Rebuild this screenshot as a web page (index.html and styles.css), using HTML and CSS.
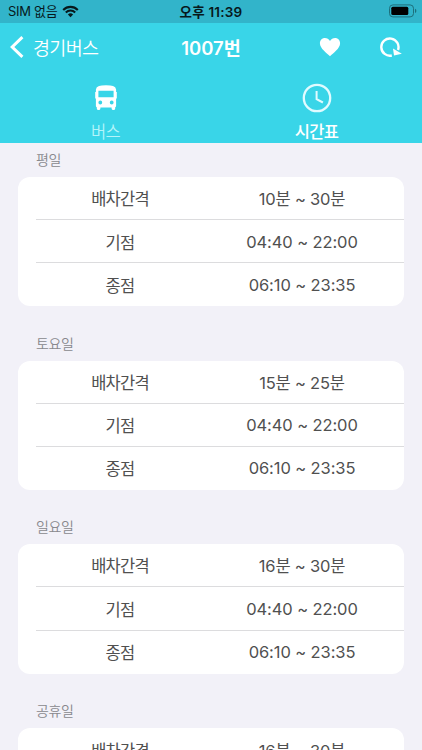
FILE: index.html
```html
<!DOCTYPE html>
<html lang="ko">
<head>
    <meta charset="UTF-8" />
    <meta name="viewport" content="width=device-width, initial-scale=1.0"/>
    <title>경기버스</title>
    <link rel="stylesheet" href="styles.css">
</head>
<body>
<div class="status-bar">
    <div class="carrier">
        <span>SIM 없음</span>
        <svg width="17" height="13" viewBox="0 0 17 13">
            <path d="M1.2 4.9A10.3 10.3 0 0 1 15.8 4.9M3.8 7.5A6.7 6.7 0 0 1 13.2 7.5" fill="none" stroke="#07191c" stroke-width="2.1"/>
            <path d="M8.5 12.2L5.9 9.6A3.7 3.7 0 0 1 11.1 9.6Z" fill="#07191c"/>
        </svg>
    </div>
    <div class="clock">오후 11:39</div>
    <div class="battery">
        <svg width="28" height="14" viewBox="0 0 28 14">
            <rect x="0.5" y="0.9" width="24" height="12" rx="3.4" fill="none" stroke="#1d6f7b"/>
            <rect x="2.3" y="2.7" width="17" height="8.4" rx="1.5" fill="#000"/>
            <path d="M26 4.8Q27.4 5.4 27.4 6.9T26 9Z" fill="#1d6f7b"/>
        </svg>
    </div>
</div>

<header class="header">
    <nav class="nav">
        <a class="back">
            <svg width="14" height="22" viewBox="0 0 14 22">
                <path d="M12.4 1.2L2.2 11L12.4 20.8" fill="none" stroke="#fff" stroke-width="3"/>
            </svg>
            <span>경기버스</span>
        </a>
        <h1 class="title">1007번</h1>
        <div class="actions">
            <svg width="22" height="20" viewBox="0 0 22 20">
                <path d="M11 19.2C8 16.4 0.9 11.5 0.9 6.3C0.9 3 3.1 0.9 5.9 0.9C8 0.9 9.9 2 11 4C12.1 2 14 0.9 16.1 0.9C18.9 0.9 21.1 3 21.1 6.3C21.1 11.5 14 16.4 11 19.2Z" fill="#fff"/>
            </svg>
            <svg width="22" height="22" viewBox="0 0 22 22">
                <path d="M11.8 19.5A8.6 8.6 0 1 1 18 14" fill="none" stroke="#fff" stroke-width="2.4"/>
                <path d="M13 12.4L14 19.4L21.8 17.8Z" fill="#fff"/>
            </svg>
        </div>
    </nav>
    <div class="tabs">
        <div class="tab">
            <svg width="30" height="30" viewBox="0 0 30 30">
                <path fill="#fff" fill-rule="evenodd" d="M8 2.9Q10 2.2 15 2.2T22 2.9Q24.8 3.7 25.1 6.5V9H25.8V15.5H25.1V23Q25.1 24 24.2 24.3V25.5Q24.2 27 22.4 27T20.6 25.5V24.4H9.4V25.5Q9.4 27 7.6 27T5.8 25.5V24.3Q4.9 24 4.9 23V15.5H4.2V9H4.9V6.5Q5.2 3.7 8 2.9ZM7.4 7.8V14.2H22.6V7.8ZM9.3 17.6A1.9 1.9 0 1 0 9.3 21.4A1.9 1.9 0 1 0 9.3 17.6ZM20.7 17.6A1.9 1.9 0 1 0 20.7 21.4A1.9 1.9 0 1 0 20.7 17.6Z"/>
            </svg>
            <span>버스</span>
        </div>
        <div class="tab active">
            <svg width="30" height="30" viewBox="0 0 30 30">
                <circle cx="15" cy="15" r="13.2" fill="none" stroke="#e0fbff" stroke-width="2.3"/>
                <path d="M14.6 8V16.1L20.9 19.5" fill="none" stroke="#e0fbff" stroke-width="2"/>
            </svg>
            <span>시간표</span>
        </div>
    </div>
</header>

<main class="schedule">
    <section class="group">
        <h2>평일</h2>
        <div class="card">
            <div class="row"><span>배차간격</span><span class="interval">10분 ~ 30분</span></div>
            <div class="row"><span>기점</span><span class="time">04:40 ~ 22:00</span></div>
            <div class="row"><span>종점</span><span class="time">06:10 ~ 23:35</span></div>
        </div>
    </section>
    <section class="group">
        <h2>토요일</h2>
        <div class="card">
            <div class="row"><span>배차간격</span><span class="interval">15분 ~ 25분</span></div>
            <div class="row"><span>기점</span><span class="time">04:40 ~ 22:00</span></div>
            <div class="row"><span>종점</span><span class="time">06:10 ~ 23:35</span></div>
        </div>
    </section>
    <section class="group">
        <h2>일요일</h2>
        <div class="card">
            <div class="row"><span>배차간격</span><span class="interval">16분 ~ 30분</span></div>
            <div class="row"><span>기점</span><span class="time">04:40 ~ 22:00</span></div>
            <div class="row"><span>종점</span><span class="time">06:10 ~ 23:35</span></div>
        </div>
    </section>
    <section class="group">
        <h2>공휴일</h2>
        <div class="card">
            <div class="row"><span>배차간격</span><span class="interval">16분 ~ 30분</span></div>
        </div>
    </section>
</main>
</body>
</html>
```
FILE: styles.css
```css
* {
    box-sizing: border-box;
}

body {
    margin: 0;
    height: 100vh;
    overflow: hidden;
    display: flex;
    flex-direction: column;
    font-family: Inter, 'Noto Sans CJK KR', sans-serif;
    background-color: #f2f1f8;
}

svg {
    display: block;
    flex: none;
}

.status-bar {
    display: grid;
    grid-template-columns: 1fr auto 1fr;
    align-items: center;
    height: 23px;
    flex: none;
    padding: 0 5px 0 8px;
    background-color: #32b4ca;
    color: #07191c;
    font-size: 13px;
    line-height: 23px;
}

.carrier {
    display: flex;
    align-items: center;
    gap: 5px;
    letter-spacing: -0.3px;
}

.clock {
    margin-left: -3px;
    padding-top: 1px;
    font-size: 13.5px;
    font-weight: 600;
    line-height: 22px;
    letter-spacing: 0.2px;
}

.battery {
    justify-self: end;
    padding-bottom: 2px;
}

.header {
    height: 120px;
    flex: none;
    background-color: #39d5e8;
    color: #fff;
}

.nav {
    display: grid;
    grid-template-columns: 1fr 60px 1fr;
    align-items: center;
    height: 50px;
    padding: 0 20px 2px 10px;
}

.back {
    display: flex;
    align-items: center;
    gap: 9px;
    font-size: 18.5px;
    font-weight: 350;
    letter-spacing: -0.7px;
    white-space: nowrap;
}

.title {
    margin: 0 -5px 0 5px;
    font-size: 18.5px;
    font-weight: 600;
    text-align: center;
    white-space: nowrap;
}

.actions {
    display: flex;
    align-items: center;
    justify-content: flex-end;
    gap: 39px;
}

.tabs {
    display: grid;
    grid-template-columns: 1fr 1fr;
    height: 70px;
    padding-top: 10px;
}

.tab {
    display: flex;
    flex-direction: column;
    align-items: center;
    gap: 7px;
    font-size: 16.5px;
    font-weight: 350;
    line-height: 24px;
    letter-spacing: -0.7px;
    color: #b4f4fa;
}

.tab.active {
    font-weight: 500;
    color: #fff;
}

.schedule {
    flex: 1;
    overflow: hidden;
    padding: 7px 18px 0;
}

.group {
    height: 183.7px;
}

.group h2 {
    margin: 0;
    padding: 0 18px 7px;
    font-size: 14px;
    font-weight: 350;
    line-height: 20px;
    letter-spacing: -0.4px;
    color: #88888d;
}

.card {
    background-color: #fff;
    border-radius: 12px;
    overflow: hidden;
}

.row {
    display: grid;
    grid-template-columns: 1fr 1fr;
    gap: 14px;
    align-items: center;
    height: 43.1px;
    margin-left: 18px;
    padding-right: 18px;
    text-align: center;
    font-size: 16.5px;
    font-weight: 400;
    letter-spacing: -0.75px;
    color: #505050;
}

.row:not(:last-child) {
    border-bottom: 1px solid #dcdcde;
}

.row:nth-child(2) {
    padding-top: 1px;
}

.interval {
    letter-spacing: -0.2px;
}

.time {
    letter-spacing: -0.1px;
}
```
